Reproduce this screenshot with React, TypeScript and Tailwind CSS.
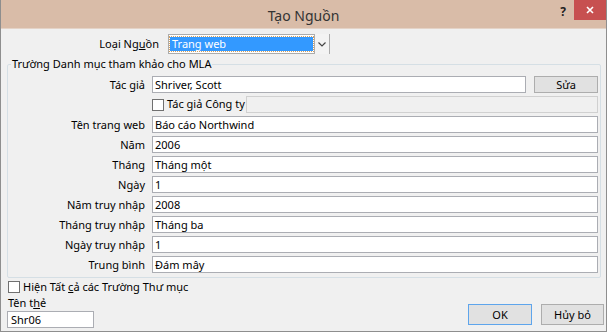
import React from "react";

const font = "font-['Noto_Sans','DejaVu_Sans',sans-serif]";

const Field = ({ label, value }: { label: string; value: string }) => (
  <div className="flex items-center h-[17px]">
    <div className="w-[137px] text-right leading-[17px] whitespace-nowrap">{label}</div>
    <div className="ml-[7px] flex-1 h-[17px] bg-white border border-[#abadb3] pl-[2px] leading-[15px] whitespace-nowrap">
      {value}
    </div>
  </div>
);

const Checkbox = () => (
  <div className="w-[12px] h-[12px] shrink-0 bg-white border border-[#707070]" />
);

export default function App() {
  const rows = [
    { label: "Tên trang web", value: "Báo cáo Northwind" },
    { label: "Năm", value: "2006" },
    { label: "Tháng", value: "Tháng một" },
    { label: "Ngày", value: "1" },
    { label: "Năm truy nhập", value: "2008" },
    { label: "Tháng truy nhập", value: "Tháng ba" },
    { label: "Ngày truy nhập", value: "1" },
    { label: "Trung bình", value: "Đám mây" },
  ];

  return (
    <div className={`w-[607px] h-[332px] flex flex-col bg-[#f0f0f0] border-x border-b border-[#8e8e8e] text-[11px] text-black overflow-hidden ${font}`}>
      {/* title bar */}
      <div className="h-[29px] shrink-0 flex bg-[#d9bca8] border-b border-[#e4d3c7]">
        <div className="flex-1" />
        <div className="pt-[6px] text-[14px] leading-[20px] text-[#333]">Tạo Nguồn</div>
        <div className="flex-1 flex justify-end items-start">
          <div className="mt-[4px] mr-[8px] text-[12px] font-bold leading-[16px] text-[#222]">?</div>
          <div className="w-[32px] h-[20px] bg-[#c75050] flex items-center justify-center">
            <svg width="8" height="8" viewBox="0 0 8 8">
              <path d="M1 1 L7 7 M7 1 L1 7" stroke="white" strokeWidth="1.6" />
            </svg>
          </div>
        </div>
      </div>

      {/* body */}
      <div className="flex-1 flex flex-col pl-[6px] pr-[2px]">
        <div className="mt-[5px] flex items-center h-[20px]">
          <div className="w-[152px] text-right whitespace-nowrap">
            Loại Ng<span className="underline">u</span>ồn
          </div>
          <div className="ml-[9px] w-[162px] h-[20px] flex bg-white border border-[#acacac] py-[2px] pl-[1px]">
            <div className="flex-1 bg-[#3399ff] text-white leading-[13px] pl-[2px] outline outline-1 outline-dotted outline-[#d4a060]">
              Trang web
            </div>
            <div className="w-[15px] -my-[3px] ml-[1px] border-l border-[#acacac] bg-[#f3f3f3] flex items-center justify-center">
              <svg width="8" height="5" viewBox="0 0 8 5">
                <path d="M0.5 0.5 L4 4 L7.5 0.5" stroke="#444" strokeWidth="1.2" fill="none" />
              </svg>
            </div>
          </div>
        </div>

        <fieldset className="mt-[2px] mr-[3px] border border-[#d5dfe5] rounded-[2px] pr-[2px] pb-[4px]">
          <legend className="ml-[3px] px-[1px] leading-[16px] whitespace-nowrap">
            Trường Danh mục tham khảo cho MLA
          </legend>
          <div className="flex flex-col gap-[3px] pt-[4px]">
            <div className="flex items-center h-[17px]">
              <div className="w-[137px] text-right leading-[17px]">Tác giả</div>
              <div className="ml-[7px] flex-1 h-[17px] bg-white border border-[#abadb3] pl-[2px] leading-[15px]">
                Shriver, Scott
              </div>
              <div className="ml-[8px] w-[64px] h-[17px] bg-[#e1e1e1] border border-[#adadad] text-center leading-[15px]">
                Sửa
              </div>
            </div>
            <div className="flex items-center h-[17px]">
              <div className="w-[137px]" />
              <div className="ml-[7px] w-[94px] flex items-center">
                <Checkbox />
                <span className="ml-[3px] whitespace-nowrap">Tác giả Công ty</span>
              </div>
              <div className="flex-1 h-[17px] bg-[#f0f0f0] border border-[#d0d0d0]" />
            </div>
            {rows.map((r) => (
              <Field key={r.label} label={r.label} value={r.value} />
            ))}
          </div>
        </fieldset>

        <div className="flex-1 flex justify-between items-end pb-[3px]">
          <div className="flex flex-col">
            <div className="flex items-center h-[14px] pl-[1px]">
              <Checkbox />
              <span className="ml-[3px] whitespace-nowrap">
                Hiện Tất <span className="underline">c</span>ả các Trường Thư mục
              </span>
            </div>
            <div className="mt-[1px] leading-[15px] pl-[1px]">
              Tên t<span className="underline">h</span>ẻ
            </div>
            <div className="mt-[1px] w-[87px] h-[17px] bg-white border border-[#abadb3] pl-[3px] leading-[15px]">
              Shr06
            </div>
          </div>
          <div className="flex gap-[9px] mb-[3px]">
            <div className="w-[64px] h-[21px] bg-[#e1e1e1] border border-[#5ea5ec] text-center leading-[19px]">
              OK
            </div>
            <div className="w-[63px] h-[21px] bg-[#e1e1e1] border border-[#adadad] text-center leading-[19px]">
              Hủy bỏ
            </div>
          </div>
        </div>
      </div>
    </div>
  );
}
